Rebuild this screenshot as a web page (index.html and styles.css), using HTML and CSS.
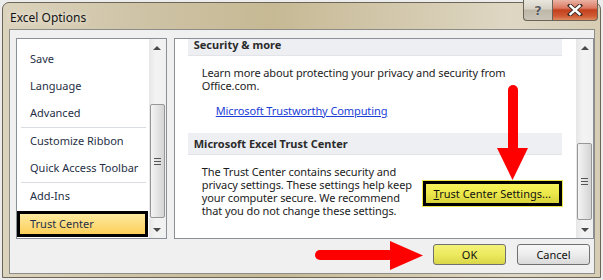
FILE: index.html
```html
<!DOCTYPE html>
<html>
<head>
<meta charset="utf-8">
<link rel="stylesheet" href="styles.css">
</head>
<body>
<div class="window">
  <div class="titlebar"><span class="title">Excel Options</span></div>
  <div class="caption-btns">
    <div class="cap help">?</div>
    <div class="cap close">
      <svg width="16" height="12" viewBox="0 0 16 12"><path d="M3 1.5 L13 10.5 M13 1.5 L3 10.5" stroke="#3a2a26" stroke-width="4.2" stroke-linecap="square"/><path d="M3.5 2 L12.5 10 M12.5 2 L3.5 10" stroke="#fff" stroke-width="2.4" stroke-linecap="square"/></svg>
    </div>
  </div>
  <div class="dialog">
    <div class="panels">
      <div class="panel nav">
        <div class="nav-list">
          <div class="nav-item">Save</div>
          <div class="nav-item">Language</div>
          <div class="nav-item">Advanced</div>
          <div class="sep"></div>
          <div class="nav-item">Customize Ribbon</div>
          <div class="nav-item">Quick Access Toolbar</div>
          <div class="sep"></div>
          <div class="nav-item">Add-Ins</div>
          <div class="nav-item active">Trust Center</div>
        </div>
        <div class="scrollbar">
          <div class="sb-btn"><span class="tri-up"></span></div>
          <div class="sb-track"><div class="thumb thumb-left"><span class="grip-lines"></span></div></div>
          <div class="sb-btn"><span class="tri-down"></span></div>
        </div>
      </div>
      <div class="panel content">
        <div class="content-inner">
          <div class="section-head first">Security &amp; more</div>
          <p class="text t1">Learn more about protecting your privacy and security from<br>Office.com.</p>
          <a class="link">Microsoft Trustworthy Computing</a>
          <div class="section-head second">Microsoft Excel Trust Center</div>
          <div class="tc-row">
            <p class="text t2">The Trust Center contains security and<br>privacy settings. These settings help keep<br>your computer secure. We recommend<br>that you do not change these settings.</p>
            <button class="tc-btn"><u>T</u>rust Center Settings...</button>
          </div>
        </div>
        <div class="scrollbar">
          <div class="sb-btn"><span class="tri-up"></span></div>
          <div class="sb-track"><div class="thumb thumb-right"><span class="grip-lines"></span></div></div>
          <div class="sb-btn"><span class="tri-down"></span></div>
        </div>
      </div>
    </div>
    <div class="actions">
      <button class="btn ok">OK</button>
      <button class="btn cancel">Cancel</button>
    </div>
  </div>
</div>
<svg class="arrows" width="603" height="280" viewBox="0 0 603 280">
  <g fill="#ff0000" stroke="none">
    <rect x="508" y="85" width="10" height="67" rx="5"/>
    <polygon points="497,148 528,148 512.5,180"/>
    <rect x="315" y="250" width="79" height="10" rx="5"/>
    <polygon points="390,241 390,270 423,255.5"/>
  </g>
</svg>
</body>
</html>
```

FILE: styles.css
```css
* { box-sizing: border-box; }
html, body { margin: 0; padding: 0; }
body {
  width: 603px;
  height: 280px;
  background: #ececec;
  font-family: "Noto Sans", "Liberation Sans", sans-serif;
  font-size: 11px;
  position: relative;
  overflow: hidden;
}
.window {
  position: relative;
  margin: 2px 0 0 2px;
  width: 599px;
  height: 276px;
  border: 1px solid #6b6657;
  border-radius: 7px 7px 0 0;
  background: linear-gradient(to right, #dcd3bd 0%, #cdc2a4 25%, #c6b994 45%, #d5cbb1 70%, #dfd7c4 85%, #d7cdb4 100%);
  display: flex;
  flex-direction: column;
  padding: 0 5px 3px 6px;
}
.titlebar {
  height: 26px;
  display: flex;
  align-items: center;
  padding-left: 1px;
}
.title {
  font-size: 12px;
  color: #141414;
  text-shadow: 0 0 6px rgba(255,255,255,0.9);
  margin-top: 2px;
}
.caption-btns {
  position: absolute;
  top: -3px;
  right: 2px;
  display: flex;
}
.cap {
  height: 21px;
  border: 1px solid #6a6458;
  border-top: none;
  display: flex;
  align-items: center;
  justify-content: center;
}
.help {
  width: 29px;
  border-radius: 0 0 0 4px;
  border-right: none;
  background: linear-gradient(#e9e6de 0%, #d6d1c4 45%, #bdb7a8 50%, #c9c4b6 100%);
  color: #5a5a5a;
  font-family: "DejaVu Sans", sans-serif;
  font-weight: bold;
  font-size: 13px;
  text-shadow: 0 0 1px #fff;
}
.close {
  width: 46px;
  border-radius: 0 0 4px 0;
  background: linear-gradient(#eab3a4 0%, #dc7a62 40%, #c4401e 50%, #cf5a34 80%, #e08a5e 100%);
}
.dialog {
  flex: 1;
  background: #f0f0f0;
  border: 1px solid #8c8c88;
  padding: 8px 0 0 6px;
  display: flex;
  flex-direction: column;
}
.panels {
  display: flex;
  height: 201px;
  gap: 7px;
}
.panel {
  border: 1px solid #8b8f97;
  background: #fff;
  display: flex;
  overflow: hidden;
}
.nav { width: 151px; }
.content { width: 421px; }
.nav-list {
  flex: 1;
  padding-top: 7px;
  color: #1f2f46;
}
.nav-item {
  height: 27px;
  line-height: 26px;
  padding-left: 13px;
  white-space: nowrap;
}
.sep {
  height: 1px;
  background: #d9dce2;
  margin: 0 3px 0 4px;
}
.nav-item.active {
  margin-top: 1px;
  height: 26px;
  line-height: 20px;
  margin-right: 1px;
  border: 3px solid #000;
  padding-left: 10px;
  background: linear-gradient(#fde99f 0%, #fddc7c 50%, #fcd05a 100%);
}
.scrollbar {
  width: 17px;
  background: linear-gradient(to right, #e6e6e6, #f3f3f3 40%, #f0f0f0);
  display: flex;
  flex-direction: column;
}
.sb-btn {
  height: 17px;
  display: flex;
  align-items: center;
  justify-content: center;
}
.tri-up, .tri-down {
  width: 0; height: 0;
  border-left: 4px solid transparent;
  border-right: 4px solid transparent;
}
.tri-up { border-bottom: 4px solid #4a4a4a; }
.tri-down { border-top: 4px solid #4a4a4a; }
.sb-track { flex: 1; position: relative; }
.thumb {
  margin: 0 1px;
  border: 1px solid #979797;
  border-radius: 2px;
  background: linear-gradient(to right, #f4f4f4, #e4e4e4 50%, #d4d4d4);
  display: flex;
  align-items: center;
  justify-content: center;
}
.thumb-left { margin-top: 48px; height: 114px; }
.thumb-right { margin-top: 87px; height: 77px; }
.grip-lines {
  width: 7px;
  height: 7px;
  background: linear-gradient(#555 0 1px, transparent 1px 3px, #555 3px 4px, transparent 4px 6px, #555 6px 7px);
}
.content-inner {
  flex: 1;
  padding: 0 14px 0 13px;
  color: #1c1c1c;
  letter-spacing: -0.1px;
}
.section-head {
  background: #edeff3;
  border-bottom: 1px solid #e2e4e8;
  font-weight: bold;
  color: #2b2b2b;
  padding-left: 6px;
  height: 22px;
  line-height: 22px;
  letter-spacing: 0;
}
.section-head.first { margin-top: -5px; }
.section-head.second { margin-top: 16px; }
.text { margin: 0; padding-left: 14px; white-space: nowrap; }
.t1 { margin-top: 10px; line-height: 13px; }
.link {
  display: block;
  margin-top: 12px;
  padding-left: 28px;
  line-height: 13px;
  color: #1a3ed6;
  text-decoration: underline;
}
.tc-row { display: flex; align-items: flex-start; }
.t2 { margin-top: 10px; line-height: 13px; flex: 0 0 235px; }
.tc-btn {
  margin-top: 26px;
  width: 139px;
  height: 25px;
  border: 3px solid #000;
  box-shadow: 0 0 0 1px #ece84a;
  background: linear-gradient(#f6f25a 0%, #ece84a 50%, #d8d23c 100%);
  font-family: inherit;
  font-size: 11px;
  color: #111;
  padding: 0;
}
.actions {
  display: flex;
  justify-content: flex-end;
  gap: 11px;
  padding-right: 4px;
  margin-top: 5px;
}
.btn {
  width: 73px;
  height: 21px;
  border: 1px solid #707070;
  border-radius: 3px;
  font-family: inherit;
  font-size: 11px;
  color: #111;
  padding: 0;
}
.ok { background: linear-gradient(#f4f278 0%, #ecea5e 50%, #d9d64a 100%); }
.cancel { background: linear-gradient(#f8f8f8 0%, #ececec 50%, #d9d9d9 100%); }
.arrows {
  position: absolute;
  top: 0;
  left: 0;
  pointer-events: none;
}
```
